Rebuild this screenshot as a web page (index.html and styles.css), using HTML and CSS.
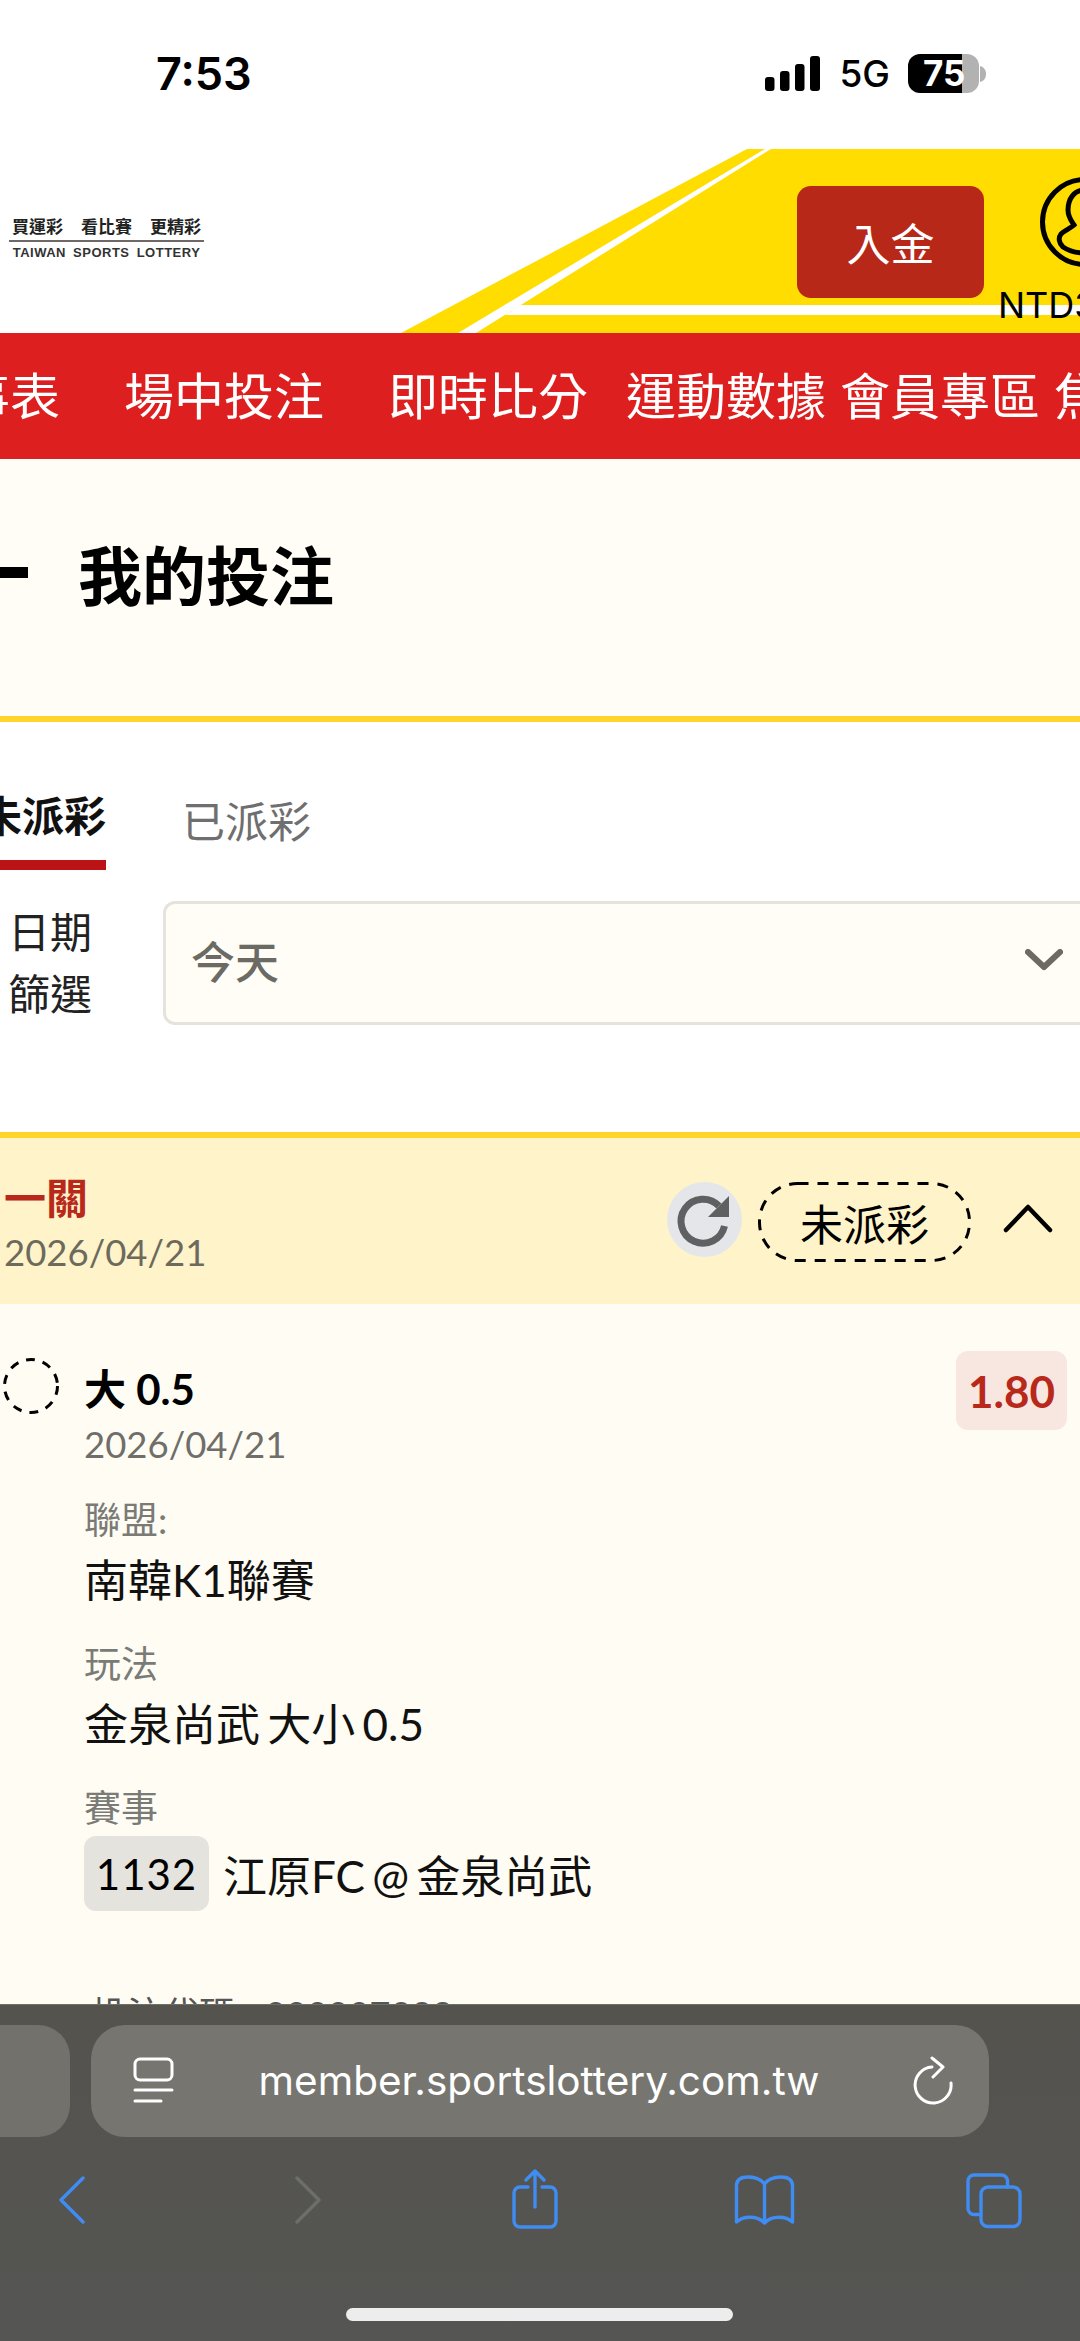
FILE: index.html
```html
<!DOCTYPE html>
<html lang="zh-Hant">
<head>
<meta charset="utf-8">
<title>我的投注</title>
<link rel="stylesheet" href="styles.css">
</head>
<body>
<div class="screen">
  <div class="status">
    <span class="time">7:53</span>
    <div class="status-right">
      <svg class="signal" viewBox="0 0 56 36" width="56" height="36"><rect x="0" y="21" width="9.5" height="14" rx="3"/><rect x="15" y="15" width="9.5" height="20" rx="3"/><rect x="30" y="8" width="9.5" height="27" rx="3"/><rect x="45" y="0" width="10" height="35" rx="3"/></svg>
      <span class="net">5G</span>
      <div class="battery"><span class="battery-level">75</span></div>
      <svg class="nub" viewBox="0 0 7 16" width="7" height="16"><path d="M0 0c4 1 6 4 6 8s-2 7-6 8z"/></svg>
    </div>
  </div>

  <header class="site-header">
    <svg class="header-art" viewBox="0 0 1080 184" width="1080" height="184">
      <polygon class="art-yellow" points="401,184 747,0 1080,0 1080,184"/>
      <polygon class="art-white" points="765,0 771,0 476,184 458,184"/>
      <polygon class="art-white" points="520,156 1080,156 1080,166 505,166"/>
    </svg>
    <div class="logo">
      <div class="logo-cn"><span>買運彩</span><span>看比賽</span><span>更精彩</span></div>
      <div class="logo-en">TAIWAN SPORTS LOTTERY</div>
    </div>
    <button class="deposit">入金</button>
    <div class="account">
      <svg class="avatar" viewBox="0 0 90 90" width="90" height="90"><circle cx="45" cy="45" r="42.5"/><path d="M45 13c-11 0-17 9-17 20 0 7 4 12 6 15-3 3-9 5-13 9-3 4-2 9 2 13 6 4 14 6 22 6s16-2 22-6c4-4 5-9 2-13-4-4-10-6-13-9 2-3 6-8 6-15 0-11-6-20-17-20z"/></svg>
      <span class="balance">NTD3</span>
    </div>
  </header>

  <nav class="nav">
    <span class="nav-item nav-first">賽事表</span>
    <span class="nav-item nav-wide">場中投注</span>
    <span class="nav-item nav-wide">即時比分</span>
    <span class="nav-item nav-mid">運動數據</span>
    <span class="nav-item nav-tight">會員專區</span>
    <span class="nav-item nav-tight">焦點</span>
  </nav>

  <main class="content">
    <div class="title-band">
      <span class="title-bar"></span>
      <h1 class="title">我的投注</h1>
    </div>

    <section class="filters">
      <div class="tabs">
        <div class="tab tab-active">未派彩</div>
        <div class="tab">已派彩</div>
      </div>
      <div class="filter-row">
        <div class="filter-label">日期<br>篩選</div>
        <div class="select">
          <span class="select-value">今天</span>
          <svg class="select-arrow" viewBox="0 0 38 22" width="38" height="22"><path d="M3 3l16 15L35 3"/></svg>
        </div>
      </div>
    </section>

    <section class="ticket">
      <div class="ticket-head">
        <div class="ticket-info">
          <div class="ticket-type">一關</div>
          <div class="ticket-date">2026/04/21</div>
        </div>
        <div class="ticket-actions">
          <div class="refresh">
            <svg viewBox="0 0 75 75" width="75" height="75"><path class="refresh-arc" d="M57.500 44A22 22 0 1 1 52 24"/><polygon class="refresh-tip" points="62,14 62,35 41,35"/></svg>
          </div>
          <div class="pill">
            <svg class="pill-outline" viewBox="0 0 213 80" width="213" height="80"><rect x="1.500" y="1.500" width="210" height="77" rx="38"/></svg>
            未派彩
          </div>
          <svg class="collapse" viewBox="0 0 50 30" width="50" height="30"><path d="M3 27L25 4l22 23"/></svg>
        </div>
      </div>

      <div class="bet">
        <svg class="bet-status" viewBox="0 0 58 58" width="58" height="58"><circle cx="29" cy="29" r="26.500"/></svg>
        <div class="bet-main">
          <div class="bet-name">大 0.5</div>
          <div class="bet-date">2026/04/21</div>
          <div class="field-label field-first">聯盟:</div>
          <div class="field-value">南韓K1聯賽</div>
          <div class="field-label">玩法</div>
          <div class="field-value">金泉尚武 大小 0.5</div>
          <div class="field-label">賽事</div>
          <div class="match">
            <span class="match-no">1132</span>
            <span class="match-name">江原FC @ 金泉尚武</span>
          </div>
          <div class="bet-code">投注代碼: 000007299</div>
        </div>
        <div class="odds">1.80</div>
      </div>
    </section>
  </main>

  <footer class="browser">
    <div class="address-row">
      <div class="prev-tab"></div>
      <div class="address">
        <svg class="reader" viewBox="0 0 41 48" width="41" height="48"><rect x="2" y="2" width="37" height="21" rx="5"/><path d="M2 33H39M2 44H28"/></svg>
        <span class="url">member.sportslottery.com.tw</span>
        <svg class="reload" viewBox="0 0 42 50" width="42" height="50"><path d="M38 27A18 18 0 1 1 19 11M19 2l11 9-10 10"/></svg>
      </div>
    </div>
    <div class="toolbar">
      <svg class="tool" viewBox="0 0 26 60" width="26" height="60"><path d="M24 9L2 31l22 22"/></svg>
      <svg class="tool tool-off tool-forward" viewBox="0 0 26 60" width="26" height="60"><path d="M2 9l22 22L2 53"/></svg>
      <svg class="tool tool-share" viewBox="0 0 50 60" width="50" height="60"><path d="M18 18H10a6 6 0 0 0-6 6V52a6 6 0 0 0 6 6H40a6 6 0 0 0 6-6V24a6 6 0 0 0-6-6H32M25 2V38M16 11L25 2l9 9"/></svg>
      <svg class="tool tool-book" viewBox="0 0 63 60" width="63" height="60"><path d="M31.500 15C27 9 20 8 15 8 8 8 4 11 3.500 16V53C10 47 24 46 31.500 54 39 46 53 47 59.500 53V16C59 11 55 8 48 8 43 8 36 9 31.500 15V54"/></svg>
      <svg class="tool tool-tabs" viewBox="0 0 60 60" width="60" height="60"><path d="M43.500 18V12a6 6 0 0 0-6-6H10a6 6 0 0 0-6 6V39.500a6 6 0 0 0 6 6H17"/><rect x="17" y="18" width="39" height="39.500" rx="7"/></svg>
    </div>
    <div class="home-indicator"></div>
  </footer>
</div>
</body>
</html>
```

FILE: styles.css
```css
* { box-sizing: border-box; }
html, body { margin: 0; padding: 0; background: #fff; }
body { font-family: Lato, "Noto Sans CJK TC", sans-serif; color: #000; }

.screen {
  width: 1080px;
  height: 2341px;
  overflow: hidden;
  display: flex;
  flex-direction: column;
  background: #fff;
}

/* status bar */
.status {
  height: 149px;
  flex-shrink: 0;
  display: flex;
  align-items: center;
  padding: 0 93px 2px 156px;
}
.time { font: 600 45px/1 Inter, sans-serif; }
.status-right { margin-left: auto; display: flex; align-items: center; }
.signal { fill: #000; margin-right: 18px; }
.net { font: 500 37px/1 Inter, sans-serif; margin-right: 18px; }
.battery {
  width: 71px;
  height: 39px;
  border-radius: 12px;
  background: linear-gradient(90deg, #000 54px, #b2b2b2 54px);
  padding-left: 15px;
}
.battery-level { font: 700 35px/39px Inter, sans-serif; color: #fff; }
.nub { fill: #b2b2b2; margin-left: 1px; }

/* site header */
.site-header {
  position: relative;
  height: 184px;
  flex-shrink: 0;
  display: flex;
  align-items: flex-start;
}
.header-art { position: absolute; left: 0; top: 0; }
.art-yellow { fill: #ffdd00; }
.art-white { fill: #fff; }
.logo { position: relative; width: 195px; margin: 68px 0 0 9px; flex-shrink: 0; }
.logo-cn {
  display: flex;
  justify-content: space-between;
  padding: 0 3px;
  font: 700 17px/17px "Noto Sans CJK TC", sans-serif;
  color: #222;
  border-bottom: 2px solid #6f6866;
  height: 25px;
}
.logo-en {
  margin-top: 5px;
  text-align: center;
  font: 700 13px/12px "Liberation Sans", sans-serif;
  letter-spacing: 0.5px;
  word-spacing: 3px;
  color: #333;
  white-space: nowrap;
}
.deposit {
  position: relative;
  flex-shrink: 0;
  width: 187px;
  height: 112px;
  margin: 37px 0 0 593px;
  border: 0;
  border-radius: 14px;
  background: #b72819;
  color: #fff;
  font: 400 44px/1 "Noto Sans CJK TC", sans-serif;
}
.account { position: relative; flex-shrink: 0; margin: 28px 0 0 14px; width: 160px; }
.avatar { display: block; margin-left: 42px; fill: none; stroke: #000; stroke-width: 5; }
.balance { display: block; font: 400 36px/36px Inter, sans-serif; margin-top: 20px; }

/* nav */
.nav {
  height: 126px;
  flex-shrink: 0;
  display: flex;
  align-items: center;
  padding-bottom: 7px;
  background: #dd1f1f;
  color: #fff;
  font: 400 50px/1 "Noto Sans CJK TC", sans-serif;
  white-space: nowrap;
}
.nav-item { flex-shrink: 0; }
.nav-first { margin-left: -90px; }
.nav-wide { margin-left: 64px; }
.nav-mid { margin-left: 38px; }
.nav-tight { margin-left: 14px; }

/* content */
.content { flex: 1; min-height: 0; overflow: hidden; }
.title-band {
  height: 263px;
  background: #fffdf5;
  border-bottom: 6px solid #ffd52b;
  display: flex;
  align-items: center;
  padding-bottom: 30px;
}
.title-bar { width: 28px; height: 11px; background: #000; flex-shrink: 0; }
.title { margin: 0 0 0 50px; font: 700 64px/1.2 "Noto Sans CJK TC", sans-serif; }

.filters { padding-top: 68px; }
.tabs { display: flex; font: 400 43px/52px Lato, "Noto Sans CJK TC", sans-serif; }
.tab { flex-shrink: 0; color: #6f6f6f; padding-top: 6px; margin-left: 76px; }
.tab-active {
  color: #111;
  font-weight: 700;
  font-size: 42px;
  margin-left: -20px;
  padding: 0 0 18px;
  border-bottom: 10px solid #bb1316;
}
.filter-row { display: flex; align-items: center; margin-top: 31px; height: 124px; }
.filter-label {
  width: 163px;
  flex-shrink: 0;
  padding-left: 8px;
  font-size: 42px;
  line-height: 62px;
  color: #222;
}
.select {
  width: 937px;
  height: 124px;
  flex-shrink: 0;
  display: flex;
  align-items: center;
  justify-content: space-between;
  padding: 0 34px 6px 25px;
  background: #fffdf5;
  border: 3px solid #e6e3dc;
  border-radius: 12px;
  color: #6b6a64;
}
.select-value { font: 500 44px/1 "Noto Sans CJK TC", sans-serif; }
.select-arrow { fill: none; stroke: #6b6a64; stroke-width: 6; stroke-linecap: round; stroke-linejoin: round; }

/* ticket */
.ticket { margin-top: 107px; border-top: 6px solid #ffd52b; background: #fffcf3; min-height: 1000px; }
.ticket-head {
  height: 166px;
  background: #fef3c9;
  display: flex;
  align-items: flex-start;
  padding: 30px 27px 0 4px;
}
.ticket-type { font: 700 42px/56px "Noto Sans CJK TC", sans-serif; color: #b8291b; }
.ticket-date { font-size: 36.500px; line-height: 57px; color: #6d6a5c; }
.ticket-actions { margin: 14px 0 0 auto; display: flex; align-items: flex-start; }
.refresh { width: 75px; height: 75px; border-radius: 50%; background: #e5e6ea; flex-shrink: 0; }
.refresh svg { display: block; }
.refresh-arc { fill: none; stroke: #5f6062; stroke-width: 7; }
.refresh-tip { fill: #5f6062; }
.pill {
  position: relative;
  width: 213px;
  height: 80px;
  margin-left: 16px;
  display: flex;
  align-items: center;
  justify-content: center;
  font: 400 43px/1 "Noto Sans CJK TC", sans-serif;
  flex-shrink: 0;
}
.pill-outline {
  position: absolute;
  left: 0;
  top: 0;
  fill: none;
  stroke: #000;
  stroke-width: 3;
  stroke-dasharray: 11 9;
}
.collapse {
  margin: 21px 0 0 32px;
  flex-shrink: 0;
  fill: none;
  stroke: #000;
  stroke-width: 4.500;
  stroke-linecap: round;
  stroke-linejoin: round;
}

.bet { display: flex; align-items: flex-start; padding: 0 13px 0 2px; }
.bet-status {
  margin-top: 53px;
  flex-shrink: 0;
  fill: none;
  stroke: #000;
  stroke-width: 3;
  stroke-dasharray: 9 8;
}
.bet-main { margin: 57px 0 0 24px; }
.bet-name { font: 700 42px/56px Lato, "Noto Sans CJK TC", sans-serif; }
.bet-date { font-size: 36.500px; line-height: 54px; color: #6f6e6a; }
.field-label { font-size: 37px; line-height: 46px; color: #7a7a76; margin-top: 34px; }
.field-first { margin-top: 26px; }
.field-value { font-size: 44px; line-height: 54px; margin-top: 10px; color: #111; word-spacing: -4px; }
.match { display: flex; align-items: center; margin-top: 5px; }
.match-no {
  width: 125px;
  height: 75px;
  background: #e5e3dd;
  border-radius: 12px;
  display: flex;
  align-items: center;
  justify-content: center;
  font-size: 42px;
  letter-spacing: 1px;
}
.match-name { margin-left: 14px; font-size: 44px; color: #111; word-spacing: -4px; }
.bet-code { margin: 80px 0 0 7px; font-size: 36px; line-height: 46px; color: #555; white-space: nowrap; word-spacing: 12px; }
.odds {
  margin: 47px 0 0 auto;
  width: 111px;
  height: 79px;
  background: #f7e7e0;
  border-radius: 12px;
  display: flex;
  align-items: center;
  justify-content: center;
  color: #b8291b;
  font-size: 44px;
  font-weight: 700;
  flex-shrink: 0;
}

/* browser chrome */
.browser {
  height: 337px;
  flex-shrink: 0;
  background: linear-gradient(180deg, #54534e, #555553);
  border-top: 1px solid #6f6e68;
}
.address-row { display: flex; padding-top: 20px; }
.prev-tab {
  width: 300px;
  height: 112px;
  margin-left: -230px;
  flex-shrink: 0;
  border-radius: 32px;
  background: #72716c;
}
.address {
  width: 898px;
  height: 112px;
  margin-left: 21px;
  flex-shrink: 0;
  display: flex;
  align-items: center;
  padding: 0 34px 0 42px;
  border-radius: 34px;
  background: #767570;
  color: #fff;
}
.reader, .reload { flex-shrink: 0; fill: none; stroke: #fff; stroke-width: 3; stroke-linecap: round; stroke-linejoin: round; }
.url { flex: 1; text-align: center; padding-right: 9px; font: 400 40.5px/1 Inter, sans-serif; white-space: nowrap; }
.toolbar { display: flex; padding: 32px 0 0 59px; }
.tool { flex-shrink: 0; fill: none; stroke: #3f8cf2; stroke-width: 3.400; stroke-linecap: round; stroke-linejoin: round; }
.tool-off { stroke: #6d6d69; }
.tool-forward { margin-left: 210px; }
.tool-share { margin-left: 189px; }
.tool-book { margin-left: 173px; }
.tool-tabs { margin-left: 168px; }
.home-indicator {
  width: 387px;
  height: 13px;
  margin: 79px 0 0 346px;
  border-radius: 7px;
  background: #ededed;
}
```
